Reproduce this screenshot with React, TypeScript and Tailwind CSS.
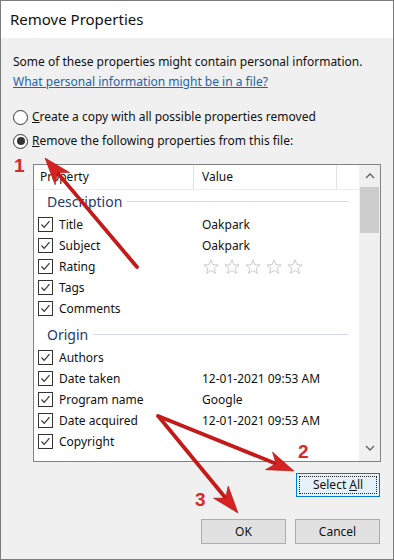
import React from "react";

const Check = () => (
  <div className="w-[15px] h-[15px] border border-[#333] bg-white flex items-center justify-center shrink-0">
    <svg width="11" height="11" viewBox="0 0 11 11">
      <polyline points="1.5,5.5 4.2,8.3 9.5,2.2" fill="none" stroke="#333" strokeWidth="1.2" />
    </svg>
  </div>
);

const Star = () => (
  <svg width="18" height="18" viewBox="0 0 24 24" className="shrink-0">
    <polygon
      points="12,2.5 14.6,9 21.5,9.3 16.1,13.7 18,20.5 12,16.6 6,20.5 7.9,13.7 2.5,9.3 9.4,9"
      fill="none"
      stroke="#c4c4c4"
      strokeWidth="1.2"
      strokeLinejoin="round"
    />
  </svg>
);

const Row = ({ name, value, stars }: { name: string; value?: string; stars?: boolean }) => (
  <div className="h-[21px] flex items-center">
    <div className="w-[160px] flex items-center pl-[4px]">
      <Check />
      <span className="ml-[6px]">{name}</span>
    </div>
    <div className="pl-[8px] flex items-center">
      {stars ? (
        <div className="flex gap-[3px]">
          <Star />
          <Star />
          <Star />
          <Star />
          <Star />
        </div>
      ) : (
        value
      )}
    </div>
  </div>
);

const Group = ({ title, first }: { title: string; first?: boolean }) => (
  <div className={first ? "h-[24px] pb-[2px] flex items-center" : "h-[28px] pt-[2px] flex items-center"}>
    <span className="pl-[13px] text-[14px] text-[#24396e]">{title}</span>
    <div className="flex-1 h-px bg-[#d3dae6] ml-[5px] mr-[11px]" />
  </div>
);

function arrowPoints(x1: number, y1: number, x2: number, y2: number, L: number, W: number) {
  const dx = x2 - x1;
  const dy = y2 - y1;
  const len = Math.sqrt(dx * dx + dy * dy);
  const ux = dx / len;
  const uy = dy / len;
  const nx = -uy;
  const ny = ux;
  const bx = x2 - L * ux;
  const by = y2 - L * uy;
  const kx = x2 - 0.72 * L * ux;
  const ky = y2 - 0.72 * L * uy;
  const pts = [
    [x2, y2],
    [bx + W * nx, by + W * ny],
    [kx, ky],
    [bx - W * nx, by - W * ny],
  ];
  return {
    poly: pts.map((p) => p.join(",")).join(" "),
    lx: kx,
    ly: ky,
  };
}

const Arrow = ({ x1, y1, x2, y2 }: { x1: number; y1: number; x2: number; y2: number }) => {
  const a = arrowPoints(x1, y1, x2, y2, 27, 9.5);
  return (
    <g>
      <line x1={x1} y1={y1} x2={a.lx} y2={a.ly} stroke="#c41a1a" strokeWidth="3.8" strokeLinecap="round" />
      <polygon points={a.poly} fill="#d62222" stroke="#a81414" strokeWidth="0.6" strokeLinejoin="round" />
    </g>
  );
};

export default function App() {
  return (
    <div className="relative w-[394px] h-[560px] box-border border border-[#7c7c7c] bg-[#f0f0f0] overflow-hidden font-['Noto_Sans',sans-serif] text-[12px] text-[#111]">
      <div className="h-[37px] bg-white flex items-center pl-[9px] text-[15px] text-[#111]">Remove Properties</div>

      <div className="pl-[12px] pt-[15px]">
        <div className="leading-[18px]">Some of these properties might contain personal information.</div>
        <div className="leading-[18px] mt-[2px] text-[#1f64a6] underline">What personal information might be in a file?</div>
      </div>

      <div className="pl-[12px] mt-[16px] h-[20px] flex items-center">
        <div className="w-[15px] h-[15px] rounded-full border border-[#333] bg-white shrink-0" />
        <span className="ml-[4px]">
          <span className="underline">C</span>reate a copy with all possible properties removed
        </span>
      </div>
      <div className="pl-[12px] mt-[4px] h-[20px] flex items-center">
        <div className="w-[15px] h-[15px] rounded-full border border-[#333] bg-white shrink-0 flex items-center justify-center">
          <div className="w-[8px] h-[8px] rounded-full bg-[#333]" />
        </div>
        <span className="ml-[4px]">
          <span className="underline">R</span>emove the following properties from this file:
        </span>
      </div>

      <div className="ml-[32px] mt-[13px] w-[348px] h-[298px] box-border border border-[#828282] bg-white flex overflow-hidden">
        <div className="flex-1 flex flex-col overflow-hidden">
          <div className="h-[25px] shrink-0 flex items-center border-b border-[#ececec]">
            <div className="w-[160px] h-full flex items-center pl-[6px] border-r border-[#e2e2e2]">Property</div>
            <div className="w-[143px] h-full flex items-center pl-[8px] border-r border-[#e2e2e2]">Value</div>
          </div>
          <Group title="Description" first />
          <Row name="Title" value="Oakpark" />
          <Row name="Subject" value="Oakpark" />
          <Row name="Rating" stars />
          <Row name="Tags" />
          <Row name="Comments" />
          <Group title="Origin" />
          <Row name="Authors" />
          <Row name="Date taken" value="12-01-2021 09:53 AM" />
          <Row name="Program name" value="Google" />
          <Row name="Date acquired" value="12-01-2021 09:53 AM" />
          <Row name="Copyright" />
        </div>
        <div className="w-[21px] shrink-0 bg-[#f0f0f0] flex flex-col">
          <div className="h-[22px] flex items-center justify-center">
            <svg width="10" height="6" viewBox="0 0 10 6">
              <polyline points="1,5 5,1 9,5" fill="none" stroke="#606060" strokeWidth="1.3" />
            </svg>
          </div>
          <div className="mx-[1px] h-[46px] bg-[#cdcdcd]" />
          <div className="flex-1" />
          <div className="h-[22px] flex items-center justify-center mb-[2px]">
            <svg width="10" height="6" viewBox="0 0 10 6">
              <polyline points="1,1 5,5 9,1" fill="none" stroke="#606060" strokeWidth="1.3" />
            </svg>
          </div>
        </div>
      </div>

      <div className="pr-[13px] mt-[11px] flex justify-end">
        <div className="w-[84px] h-[24px] box-border border border-[#0078d7] bg-[#e5f1fb] p-[2px]">
          <div className="w-full h-full border border-dotted border-[#222] flex items-center justify-center">
            Select <span className="underline ml-[3px]">A</span>ll
          </div>
        </div>
      </div>

      <div className="pr-[13px] mt-[22px] flex justify-end gap-[9px]">
        <div className="w-[85px] h-[25px] box-border border border-[#adadad] bg-[#e1e1e1] flex items-center justify-center">OK</div>
        <div className="w-[85px] h-[25px] box-border border border-[#adadad] bg-[#e1e1e1] flex items-center justify-center">Cancel</div>
      </div>

      <svg className="absolute left-0 top-0 pointer-events-none" width="394" height="560" viewBox="0 0 394 560">
        <Arrow x1={136} y1={266} x2={44} y2={157} />
        <Arrow x1={157} y1={415} x2={293} y2={470} />
        <Arrow x1={158} y1={416} x2={237} y2={512} />
      </svg>

      <div className="absolute left-[13px] top-[155px] text-[19px] leading-[20px] font-bold text-[#d42a2a] font-['Liberation_Sans',sans-serif]">1</div>
      <div className="absolute left-[297px] top-[441px] text-[19px] leading-[20px] font-bold text-[#d42a2a] font-['Liberation_Sans',sans-serif]">2</div>
      <div className="absolute left-[194px] top-[489px] text-[19px] leading-[20px] font-bold text-[#d42a2a] font-['Liberation_Sans',sans-serif]">3</div>
    </div>
  );
}
